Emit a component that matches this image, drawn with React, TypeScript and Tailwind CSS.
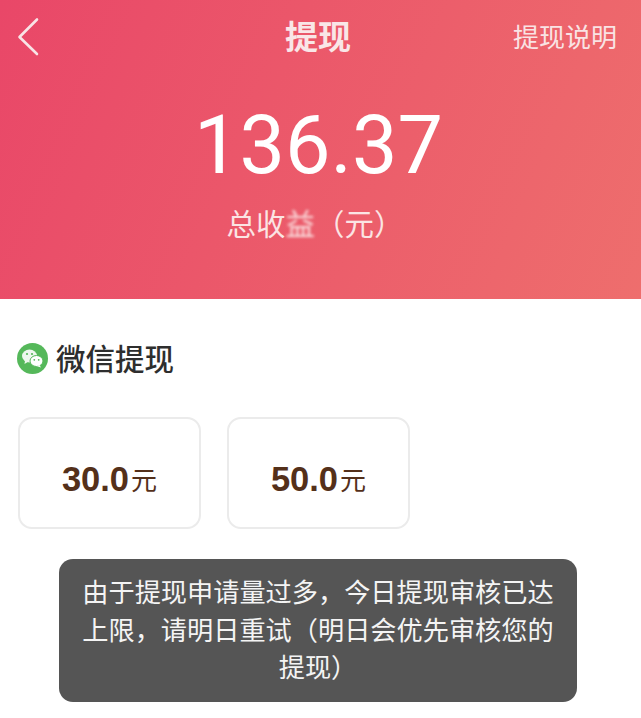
import React from 'react';

const cjk = 'font-["Noto_Sans_CJK_SC",sans-serif]';

const AmountCard: React.FC<{ amount: string }> = ({ amount }) => (
  <div className="w-[183px] h-[112px] rounded-[14px] border-2 border-[#ebebeb] bg-white flex items-center justify-center pt-[12px]">
    <span className="text-[34.5px] leading-none font-bold text-[#54301a] font-['Liberation_Sans',sans-serif]">{amount}</span>
    <span className={`text-[26px] leading-none text-[#54301a] ml-[2px] ${cjk}`}>元</span>
  </div>
);

export default function App() {
  return (
    <div className={`relative w-[641px] h-[718px] overflow-hidden bg-white ${cjk}`}>
      <div className="h-[299px] bg-[linear-gradient(112deg,#e94768,#ee6e6d)] text-white">
        <div className="flex items-center justify-between h-[74px] pl-[16px] pr-[24px]">
          <svg width="26" height="40" viewBox="0 0 26 40" fill="none" stroke="#f8e4e6" strokeWidth="2.6" strokeLinecap="round" strokeLinejoin="round">
            <path d="M21 2.5 L3.5 20 L21 37" />
          </svg>
          <span className="text-[26px] leading-none text-[#f9e3e4] -mt-[3px]">提现说明</span>
        </div>
      </div>

      {/* title and balance sit over the header */}
      <div className="absolute left-0 top-[15px] w-[636px] text-center text-[33px] leading-[40px] font-bold text-[#f9e6e7]">提现</div>
      <div className="absolute left-0 top-[98px] w-[637px] text-center text-[81px] leading-[95px] text-white font-['Roboto',sans-serif]">136.37</div>
      <div className="absolute left-0 top-[203px] w-[630px] text-center text-[29.5px] leading-[38px] text-[#fbe4e4]">
        总收<span className="inline-block blur-[1.5px]">益</span>（元）
      </div>

      <div className="flex items-center gap-[8px] pl-[17px] pt-[44px]">
        <svg width="31" height="31" viewBox="0 0 31 31">
          <circle cx="15.5" cy="15.5" r="15.5" fill="#55b85a" />
          <ellipse cx="12.5" cy="13" rx="7.5" ry="6.5" fill="#eef7ee" />
          <path d="M8 17.5 L7.5 21 L11.5 18.5 Z" fill="#eef7ee" />
          <ellipse cx="19.5" cy="18" rx="6.5" ry="5.5" fill="#ffffff" stroke="#55b85a" strokeWidth="1" />
          <path d="M22.5 22 L24 24.5 L19.5 23 Z" fill="#ffffff" />
          <circle cx="10" cy="11" r="1.1" fill="#55b85a" />
          <circle cx="15" cy="11" r="1.1" fill="#55b85a" />
          <circle cx="17.3" cy="16.8" r="0.9" fill="#55b85a" />
          <circle cx="21.7" cy="16.8" r="0.9" fill="#55b85a" />
        </svg>
        <span className="text-[29.5px] leading-[30px] font-medium text-[#2e2e2e] -mt-[4px]">微信提现</span>
      </div>

      <div className="flex gap-[26px] pl-[18px] pt-[43px]">
        <AmountCard amount="30.0" />
        <AmountCard amount="50.0" />
      </div>

      {/* toast */}
      <div className="absolute left-[59px] top-[559px] w-[518px] h-[143px] rounded-[14px] bg-[#555555] px-[20px] pt-[14px] text-center text-[26.2px] leading-[37.5px] text-[#f4f4f4]">
        由于提现申请量过多，今日提现审核已达上限，请明日重试（明日会优先审核您的提现）
      </div>
    </div>
  );
}
